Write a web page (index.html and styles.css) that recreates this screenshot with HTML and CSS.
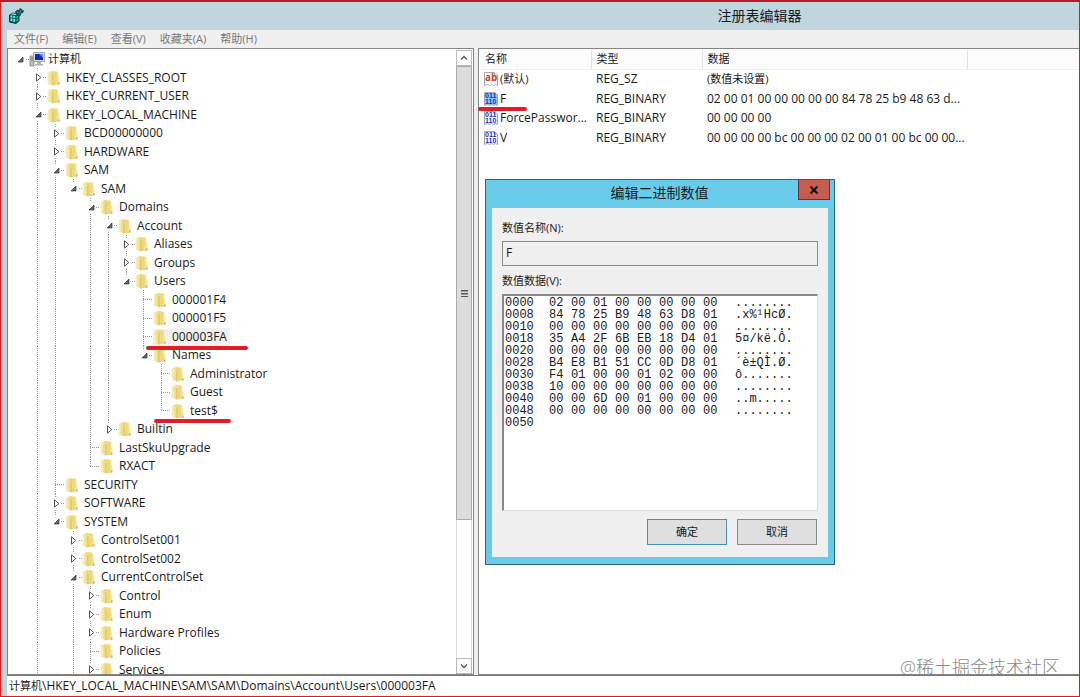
FILE: index.html
```
<!DOCTYPE html>
<html lang="zh-CN">
<head>
<title>注册表编辑器</title>
<meta charset="utf-8">
<link rel="stylesheet" href="styles.css">
</head>
<body>
<svg class="defs">
	<linearGradient id="gold" x1="0" x2="1"><stop offset="0" stop-color="#fbf3c0"/><stop offset="1" stop-color="#ecd672"/></linearGradient>
	<linearGradient id="gold2" x1="0" x2="1"><stop offset="0" stop-color="#e2c65a"/><stop offset="1" stop-color="#f8edae"/></linearGradient>
	<symbol id="folder" viewBox="0 0 16 16">
		<path d="M6 1.500h4.500l.8 1v4l1.200.5v7.500L11.500 15H6z" fill="url(#gold2)"/>
		<path d="M.5 2.500L6 .8v14.700L.5 13.800z" fill="url(#gold)"/>
		<path d="M6 .8l2 1.700v11.500l-2 1.500z" fill="#f0dc86"/>
		<path d="M6 4v11.500" stroke="#cfae48" stroke-width=".6"/>
		<path d="M11 12.500h1.500v2H11z" fill="#a3b583"/>
	</symbol>
	<symbol id="computer" viewBox="0 0 16 16">
		<path d="M1 5h4v10H1z" fill="#b9c2b6" stroke="#84907f" stroke-width=".8"/>
		<path d="M2 7h2M2 9h2" stroke="#5c665a" stroke-width=".8"/>
		<path d="M4.500 1.500h11v9h-11z" fill="#d5dbe6" stroke="#8d99ad" stroke-width=".8"/>
		<path d="M6 3h8v6H6z" fill="#1426c4"/>
		<path d="M10 3h4v4z" fill="#6d8bf0"/>
		<path d="M8 11h4v2H8zM6 13h8v1.500H6z" fill="#a9b1bf"/>
	</symbol>
	<symbol id="page" viewBox="0 0 16 16">
		<path d="M1.500 1.500h10l3 2.500v10.500l-2-1-2 1-2-1-2 1-2-1-3 1z" class="sheet"/>
		<path d="M11.500 1.500V4h3" class="sheet"/>
	</symbol>
	<symbol id="open" viewBox="0 0 9 9"><path d="M7 2v5H2z" fill="#666" stroke="#333" stroke-width=".7"/></symbol>
	<symbol id="closed" viewBox="0 0 9 9"><path d="M2.500 .8v7.400L6.800 4.500z" fill="#fff" stroke="#555"/></symbol>
</svg>

<div class="window">
	<div class="titlebar">
		<svg class="appicon" viewBox="0 0 16 16">
			<path d="M1.500 7L5 5l6 1.500v6.500L8 15.500 1.500 14z" fill="#0d6468" stroke="#06393d"/>
			<path d="M2.500 7.500h1.800v2H2.500zM5.300 8h1.800v2H5.300zM2.500 10.500h1.800v2.500H2.500zM5.300 11h1.800v2.800H5.300z" fill="#6ff0ee"/>
			<path d="M8.500 8.500l1.800-1v2l-1.800 1zM8.500 11.500l1.800-1v2l-1.800 1z" fill="#2fb5b5"/>
			<path d="M3 6.200L5 5.200l4 1-1.500.9z" fill="#a4f4f2"/>
			<path d="M7.500 3.500l2-1.500 2 .7V1L13 .6l.8 1.600 1.700.3-.5 2-2 .8-.6 2.200-2.400.5L8 6z" fill="#0a5256" stroke="#06393d" stroke-width=".6"/>
			<path d="M8.800 4l1.500.6M11.500 4.500l1.500-.8M12.500 1.800l.6.8M10.500 6.500l1-.8" stroke="#4bcfcb" stroke-width=".8"/>
		</svg>
		<h1>注册表编辑器</h1>
	</div>
	<div class="client">
		<nav class="menu">
			<a href="#">文件(F)</a>
			<a href="#">编辑(E)</a>
			<a href="#">查看(V)</a>
			<a href="#">收藏夹(A)</a>
			<a href="#">帮助(H)</a>
		</nav>
		<div class="panes">
			<div class="treepane">
				<ul class="tree">
					<li><i class="stub"><button aria-label="折叠"><svg><use href="#open"/></svg></button></i><svg class="icon"><use href="#computer"/></svg><a href="#" class="zh">计算机</a></li>
					<li><i></i><i class="tee"><button aria-label="展开"><svg><use href="#closed"/></svg></button></i><svg class="icon"><use href="#folder"/></svg><a href="#">HKEY_CLASSES_ROOT</a></li>
					<li><i></i><i class="tee"><button aria-label="展开"><svg><use href="#closed"/></svg></button></i><svg class="icon"><use href="#folder"/></svg><a href="#">HKEY_CURRENT_USER</a></li>
					<li><i></i><i class="tee"><button aria-label="折叠"><svg><use href="#open"/></svg></button></i><svg class="icon"><use href="#folder"/></svg><a href="#">HKEY_LOCAL_MACHINE</a></li>
					<li><i></i><i class="bar"></i><i class="tee"><button aria-label="展开"><svg><use href="#closed"/></svg></button></i><svg class="icon"><use href="#folder"/></svg><a href="#">BCD00000000</a></li>
					<li><i></i><i class="bar"></i><i class="tee"><button aria-label="展开"><svg><use href="#closed"/></svg></button></i><svg class="icon"><use href="#folder"/></svg><a href="#">HARDWARE</a></li>
					<li><i></i><i class="bar"></i><i class="tee"><button aria-label="折叠"><svg><use href="#open"/></svg></button></i><svg class="icon"><use href="#folder"/></svg><a href="#">SAM</a></li>
					<li><i></i><i class="bar"></i><i class="bar"></i><i class="end"><button aria-label="折叠"><svg><use href="#open"/></svg></button></i><svg class="icon"><use href="#folder"/></svg><a href="#">SAM</a></li>
					<li><i></i><i class="bar"></i><i class="bar"></i><i></i><i class="tee"><button aria-label="折叠"><svg><use href="#open"/></svg></button></i><svg class="icon"><use href="#folder"/></svg><a href="#">Domains</a></li>
					<li><i></i><i class="bar"></i><i class="bar"></i><i></i><i class="bar"></i><i class="tee"><button aria-label="折叠"><svg><use href="#open"/></svg></button></i><svg class="icon"><use href="#folder"/></svg><a href="#">Account</a></li>
					<li><i></i><i class="bar"></i><i class="bar"></i><i></i><i class="bar"></i><i class="bar"></i><i class="tee"><button aria-label="展开"><svg><use href="#closed"/></svg></button></i><svg class="icon"><use href="#folder"/></svg><a href="#">Aliases</a></li>
					<li><i></i><i class="bar"></i><i class="bar"></i><i></i><i class="bar"></i><i class="bar"></i><i class="tee"><button aria-label="展开"><svg><use href="#closed"/></svg></button></i><svg class="icon"><use href="#folder"/></svg><a href="#">Groups</a></li>
					<li><i></i><i class="bar"></i><i class="bar"></i><i></i><i class="bar"></i><i class="bar"></i><i class="end"><button aria-label="折叠"><svg><use href="#open"/></svg></button></i><svg class="icon"><use href="#folder"/></svg><a href="#">Users</a></li>
					<li><i></i><i class="bar"></i><i class="bar"></i><i></i><i class="bar"></i><i class="bar"></i><i></i><i class="tee"></i><svg class="icon"><use href="#folder"/></svg><a href="#">000001F4</a></li>
					<li><i></i><i class="bar"></i><i class="bar"></i><i></i><i class="bar"></i><i class="bar"></i><i></i><i class="tee"></i><svg class="icon"><use href="#folder"/></svg><a href="#">000001F5</a></li>
					<li class="selected"><i></i><i class="bar"></i><i class="bar"></i><i></i><i class="bar"></i><i class="bar"></i><i></i><i class="tee"></i><svg class="icon"><use href="#folder"/></svg><a href="#">000003FA</a><span class="mark mark-key"></span></li>
					<li><i></i><i class="bar"></i><i class="bar"></i><i></i><i class="bar"></i><i class="bar"></i><i></i><i class="end"><button aria-label="折叠"><svg><use href="#open"/></svg></button></i><svg class="icon"><use href="#folder"/></svg><a href="#">Names</a></li>
					<li><i></i><i class="bar"></i><i class="bar"></i><i></i><i class="bar"></i><i class="bar"></i><i></i><i></i><i class="tee"></i><svg class="icon"><use href="#folder"/></svg><a href="#">Administrator</a></li>
					<li><i></i><i class="bar"></i><i class="bar"></i><i></i><i class="bar"></i><i class="bar"></i><i></i><i></i><i class="tee"></i><svg class="icon"><use href="#folder"/></svg><a href="#">Guest</a></li>
					<li><i></i><i class="bar"></i><i class="bar"></i><i></i><i class="bar"></i><i class="bar"></i><i></i><i></i><i class="end"></i><svg class="icon"><use href="#folder"/></svg><a href="#">test$</a><span class="mark mark-name"></span></li>
					<li><i></i><i class="bar"></i><i class="bar"></i><i></i><i class="bar"></i><i class="end"><button aria-label="展开"><svg><use href="#closed"/></svg></button></i><svg class="icon"><use href="#folder"/></svg><a href="#">Builtin</a></li>
					<li><i></i><i class="bar"></i><i class="bar"></i><i></i><i class="tee"></i><svg class="icon"><use href="#folder"/></svg><a href="#">LastSkuUpgrade</a></li>
					<li><i></i><i class="bar"></i><i class="bar"></i><i></i><i class="end"></i><svg class="icon"><use href="#folder"/></svg><a href="#">RXACT</a></li>
					<li><i></i><i class="bar"></i><i class="tee"></i><svg class="icon"><use href="#folder"/></svg><a href="#">SECURITY</a></li>
					<li><i></i><i class="bar"></i><i class="tee"><button aria-label="展开"><svg><use href="#closed"/></svg></button></i><svg class="icon"><use href="#folder"/></svg><a href="#">SOFTWARE</a></li>
					<li><i></i><i class="bar"></i><i class="end"><button aria-label="折叠"><svg><use href="#open"/></svg></button></i><svg class="icon"><use href="#folder"/></svg><a href="#">SYSTEM</a></li>
					<li><i></i><i class="bar"></i><i></i><i class="tee"><button aria-label="展开"><svg><use href="#closed"/></svg></button></i><svg class="icon"><use href="#folder"/></svg><a href="#">ControlSet001</a></li>
					<li><i></i><i class="bar"></i><i></i><i class="tee"><button aria-label="展开"><svg><use href="#closed"/></svg></button></i><svg class="icon"><use href="#folder"/></svg><a href="#">ControlSet002</a></li>
					<li><i></i><i class="bar"></i><i></i><i class="tee"><button aria-label="折叠"><svg><use href="#open"/></svg></button></i><svg class="icon"><use href="#folder"/></svg><a href="#">CurrentControlSet</a></li>
					<li><i></i><i class="bar"></i><i></i><i class="bar"></i><i class="tee"><button aria-label="展开"><svg><use href="#closed"/></svg></button></i><svg class="icon"><use href="#folder"/></svg><a href="#">Control</a></li>
					<li><i></i><i class="bar"></i><i></i><i class="bar"></i><i class="tee"><button aria-label="展开"><svg><use href="#closed"/></svg></button></i><svg class="icon"><use href="#folder"/></svg><a href="#">Enum</a></li>
					<li><i></i><i class="bar"></i><i></i><i class="bar"></i><i class="tee"><button aria-label="展开"><svg><use href="#closed"/></svg></button></i><svg class="icon"><use href="#folder"/></svg><a href="#">Hardware Profiles</a></li>
					<li><i></i><i class="bar"></i><i></i><i class="bar"></i><i class="tee"></i><svg class="icon"><use href="#folder"/></svg><a href="#">Policies</a></li>
					<li><i></i><i class="bar"></i><i></i><i class="bar"></i><i class="tee"><button aria-label="展开"><svg><use href="#closed"/></svg></button></i><svg class="icon"><use href="#folder"/></svg><a href="#">Services</a></li>
				</ul>
				<div class="scrollbar">
					<button class="arrow" aria-label="向上"><svg viewBox="0 0 8 8"><path d="M1 5.500l3-3 3 3" fill="none" stroke="#555" stroke-width="1.300"/></svg></button>
					<div class="thumb"><span></span></div>
					<div class="track"></div>
					<button class="arrow" aria-label="向下"><svg viewBox="0 0 8 8"><path d="M1 2.500l3 3 3-3" fill="none" stroke="#555" stroke-width="1.300"/></svg></button>
				</div>
			</div>
			<div class="listpane">
				<table class="values">
					<colgroup><col class="c-name"><col class="c-type"><col class="c-data"><col></colgroup>
					<thead>
						<tr><th>名称</th><th>类型</th><th>数据</th><th></th></tr>
					</thead>
					<tbody>
						<tr>
							<td><div class="name"><svg class="icon" viewBox="0 0 16 16"><use href="#page"/><text x="2" y="10" class="glyph-ab">ab</text></svg><span class="zh">(默认)</span></div></td>
							<td>REG_SZ</td>
							<td class="zh">(数值未设置)</td>
							<td></td>
						</tr>
						<tr>
							<td><div class="name"><svg class="icon active" viewBox="0 0 16 16"><use href="#page"/><text x="2" y="7" class="glyph-bin">011</text><text x="2" y="13" class="glyph-bin">110</text></svg><span>F</span><span class="mark mark-value"></span></div></td>
							<td>REG_BINARY</td>
							<td>02 00 01 00 00 00 00 00 84 78 25 b9 48 63 d...</td>
							<td></td>
						</tr>
						<tr>
							<td><div class="name"><svg class="icon" viewBox="0 0 16 16"><use href="#page"/><text x="2" y="7" class="glyph-bin">011</text><text x="2" y="13" class="glyph-bin">110</text></svg><span>ForcePasswor...</span></div></td>
							<td>REG_BINARY</td>
							<td>00 00 00 00</td>
							<td></td>
						</tr>
						<tr>
							<td><div class="name"><svg class="icon" viewBox="0 0 16 16"><use href="#page"/><text x="2" y="7" class="glyph-bin">011</text><text x="2" y="13" class="glyph-bin">110</text></svg><span>V</span></div></td>
							<td>REG_BINARY</td>
							<td>00 00 00 00 bc 00 00 00 02 00 01 00 bc 00 00...</td>
							<td></td>
						</tr>
					</tbody>
				</table>
			</div>
		</div>
		<div class="statusbar"><span class="zh">计算机</span>\HKEY_LOCAL_MACHINE\SAM\SAM\Domains\Account\Users\000003FA</div>
	</div>
</div>

<form class="dialog">
	<div class="dialog-title">
		<h2>编辑二进制数值</h2>
		<button type="button" class="close" aria-label="关闭"><svg viewBox="0 0 10 10"><path d="M1.500 1.500l7 7M8.500 1.500l-7 7" stroke="#111" stroke-width="2"/></svg></button>
	</div>
	<div class="dialog-body">
		<label for="valname">数值名称(N):</label>
		<input id="valname" type="text" value="F" readonly>
		<label id="hexlabel">数值数据(V):</label>
		<div class="hexbox">
			<table class="hex" aria-labelledby="hexlabel">
				<tr><th>0000</th><td>02</td><td>00</td><td>01</td><td>00</td><td>00</td><td>00</td><td>00</td><td>00</td><td>........</td></tr>
				<tr><th>0008</th><td>84</td><td>78</td><td>25</td><td>B9</td><td>48</td><td>63</td><td>D8</td><td>01</td><td>.x%¹HcØ.</td></tr>
				<tr><th>0010</th><td>00</td><td>00</td><td>00</td><td>00</td><td>00</td><td>00</td><td>00</td><td>00</td><td>........</td></tr>
				<tr><th>0018</th><td>35</td><td>A4</td><td>2F</td><td>6B</td><td>EB</td><td>18</td><td>D4</td><td>01</td><td>5¤/kë.Ô.</td></tr>
				<tr><th>0020</th><td>00</td><td>00</td><td>00</td><td>00</td><td>00</td><td>00</td><td>00</td><td>00</td><td>........</td></tr>
				<tr><th>0028</th><td>B4</td><td>E8</td><td>B1</td><td>51</td><td>CC</td><td>0D</td><td>D8</td><td>01</td><td>´è±QÌ.Ø.</td></tr>
				<tr><th>0030</th><td>F4</td><td>01</td><td>00</td><td>00</td><td>01</td><td>02</td><td>00</td><td>00</td><td>ô.......</td></tr>
				<tr><th>0038</th><td>10</td><td>00</td><td>00</td><td>00</td><td>00</td><td>00</td><td>00</td><td>00</td><td>........</td></tr>
				<tr><th>0040</th><td>00</td><td>00</td><td>6D</td><td>00</td><td>01</td><td>00</td><td>00</td><td>00</td><td>..m.....</td></tr>
				<tr><th>0048</th><td>00</td><td>00</td><td>00</td><td>00</td><td>00</td><td>00</td><td>00</td><td>00</td><td>........</td></tr>
				<tr><th>0050</th></tr>
			</table>
		</div>
		<div class="buttons">
			<button type="button" class="default">确定</button>
			<button type="button">取消</button>
		</div>
	</div>
</form>
<div class="watermark">@稀土掘金技术社区</div>
</body>
</html>
```

FILE: styles.css
```
* {
	box-sizing: border-box;
}
body {
	margin: 0;
	font-family: "Open Sans", "Noto Sans CJK SC", sans-serif;
	font-size: 12px;
	line-height: 18px;
	color: #1a1a1a;
	background: #fff;
}
a {
	color: inherit;
	text-decoration: none;
}
button {
	font: inherit;
	color: inherit;
	padding: 0;
	border: 0;
	background: none;
}
h1, h2 {
	margin: 0;
	font-size: 14px;
	font-weight: normal;
	line-height: 20px;
}
.defs {
	position: absolute;
	width: 0;
	height: 0;
}
.zh {
	font-size: 11px;
}
.icon {
	width: 16px;
	height: 16px;
	flex: none;
}
.sheet {
	fill: var(--sheet, #fff);
	stroke: #a3a9b3;
}
.glyph-ab {
	font: bold 10px "Open Sans", sans-serif;
	fill: #d8401c;
}
.glyph-bin {
	font: bold 7px "Liberation Sans", sans-serif;
	fill: #1030d0;
}

/* main window */
.window {
	display: flex;
	flex-direction: column;
	height: 100vh;
	border: 1px solid #e01a1f;
	border-top: 2px solid #b51d22;
	background: #c1d5de;
}
.titlebar {
	display: flex;
	align-items: center;
	height: 28px;
	padding-left: 7px;
}
.titlebar h1 {
	flex: 1;
	padding-left: 416px;
	text-align: center;
}
.appicon {
	width: 16px;
	height: 16px;
}
.client {
	flex: 1;
	min-height: 0;
	display: flex;
	flex-direction: column;
	margin-left: 6px;
	background: #f0f0f0;
}
.menu {
	display: flex;
	gap: 14px;
	height: 18px;
	padding-left: 7px;
	font-size: 11px;
	color: #777;
}
.panes {
	flex: 1;
	min-height: 0;
	display: flex;
	gap: 4px;
	border-bottom: 1px solid #777;
}

/* key tree */
.treepane {
	display: flex;
	width: 467px;
	border: 1px solid #848484;
	background: #fff;
}
.tree {
	flex: 1;
	display: grid;
	grid-auto-rows: 18px 19px;
	align-content: start;
	margin: 0;
	padding: 1px 0 0 4px;
	list-style: none;
	overflow: hidden;
}
.tree li {
	display: flex;
	align-items: center;
	position: relative;
}
.tree a {
	padding: 0 3px;
}
.tree i {
	position: relative;
	display: flex;
	align-items: center;
	justify-content: center;
	align-self: stretch;
	width: 18px;
}
.tree i:nth-child(3n+1) {
	width: 17px;
}
.tree i button {
	z-index: 1;
	width: 9px;
	height: 11px;
	background: #fff;
}
.tree i svg {
	display: block;
	width: 9px;
	height: 11px;
}
.bar::before, .tee::before, .end::before {
	content: "";
	position: absolute;
	left: 8px;
	top: 0;
	bottom: 0;
	width: 1px;
	background: repeating-linear-gradient(#999 0 1px, transparent 1px 2px);
}
.end::before {
	bottom: 50%;
}
.tee::after, .end::after, .stub::after {
	content: "";
	position: absolute;
	left: 8px;
	right: 0;
	top: 9px;
	height: 1px;
	background: repeating-linear-gradient(90deg, #999 0 1px, transparent 1px 2px);
}
.selected .icon, .selected a {
	background: #f0f0f0;
}
/* hand-drawn red underlines */
.mark {
	position: absolute;
	z-index: 1;
	height: 4px;
	border-radius: 2px;
	background: #dc1f26;
}
.mark-key {
	left: 134px;
	top: 19px;
	width: 102px;
}
.mark-name {
	left: 142px;
	top: 18px;
	width: 77px;
}
.mark-value {
	left: -5px;
	top: 17px;
	width: 49px;
}

.scrollbar {
	display: flex;
	flex-direction: column;
	width: 17px;
	padding: 1px 1px 0 0;
}
.arrow {
	display: flex;
	align-items: center;
	justify-content: center;
	height: 16px;
	border: 1px solid #bbb;
	background: #fff;
}
.arrow svg {
	width: 8px;
	height: 8px;
}
.thumb {
	flex: 454;
	display: flex;
	align-items: center;
	justify-content: center;
	border: 1px solid #aaa;
	background: #dcdcdc;
}
.thumb span {
	width: 7px;
	height: 7px;
	background: repeating-linear-gradient(#555 0 1px, #999 1px 2px, transparent 2px 3px);
}
.track {
	flex: 138;
	border: solid #ddd;
	border-width: 0 1px;
}

/* value list */
.listpane {
	flex: 1;
	min-width: 0;
	padding: 1px 0 0 1px;
	border: solid #848484;
	border-width: 1px 0 1px 1px;
	background: #fff;
}
.values {
	width: 100%;
	table-layout: fixed;
	border-collapse: collapse;
}
.c-name, .c-type {
	width: 111px;
}
.c-data {
	width: 265px;
}
.values th, .values td {
	padding: 0 0 0 5px;
	text-align: left;
	white-space: nowrap;
}
.values th {
	height: 19px;
	font-size: 11px;
	font-weight: normal;
	border-right: 1px solid #e2e2e2;
	border-bottom: 1px solid #eee;
	background: #fcfcfc;
}
.values th:last-child {
	border-right: 0;
}
.values tbody tr {
	height: 20px;
}
.values tbody tr:nth-child(even) {
	height: 19px;
}
.name {
	display: flex;
	align-items: center;
	position: relative;
	margin-left: -2px;
	gap: 1px;
}
.active {
	--sheet: #8fc8fa;
}
.statusbar {
	height: 20px;
	padding-left: 2px;
	line-height: 20px;
	background: #fff;
}

/* edit dialog */
.dialog {
	position: absolute;
	left: 485px;
	top: 179px;
	width: 350px;
	height: 386px;
	display: flex;
	flex-direction: column;
	padding: 0 6px 7px;
	border: 1px solid #2f6478;
	background: #67cbe9;
}
.dialog-title {
	display: flex;
	align-items: flex-start;
	height: 28px;
	margin-right: -2px;
}
.dialog-title h2 {
	flex: 1;
	padding: 3px 0 0 29px;
	text-align: center;
}
.close {
	display: flex;
	align-items: center;
	justify-content: center;
	width: 32px;
	height: 20px;
	border: 1px solid #6d2f2f;
	border-top: 0;
	background: #c75c50;
}
.close svg {
	width: 10px;
	height: 10px;
}
.dialog-body {
	flex: 1;
	display: flex;
	flex-direction: column;
	padding: 11px 10px;
	font-size: 11px;
	background: #f0f0f0;
}
.dialog-body label {
	height: 22px;
}
.dialog-body input {
	height: 25px;
	margin-bottom: 6px;
	padding: 0 3px 3px;
	border: 1px solid #8a8a8a;
	font: inherit;
	font-size: 12px;
	color: inherit;
	background: #f0f0f0;
}
.hexbox {
	height: 217px;
	padding: 1px;
	border: 1px solid #ddd;
	border-top: 2px solid #888;
	border-left: 2px solid #888;
	background: #fff;
}
.hex {
	border-collapse: collapse;
	font: 12px/12px "Liberation Mono", monospace;
}
.hex th, .hex td {
	height: 12px;
	min-width: 22px;
	padding: 0;
	font-weight: normal;
	text-align: left;
}
.hex th {
	min-width: 44px;
}
.hex td:last-child {
	padding-left: 10px;
}
.buttons {
	display: flex;
	justify-content: flex-end;
	gap: 10px;
	margin: 8px 1px 0 0;
}
.buttons button {
	width: 80px;
	height: 26px;
	border: 1px solid #8a8a8a;
	background: #dfdfdf;
}
.buttons .default {
	border-color: #4a90bd;
}
.watermark {
	position: absolute;
	right: 20px;
	bottom: 18px;
	font-size: 18px;
	font-weight: 300;
	line-height: 24px;
	color: #888;
}
```
